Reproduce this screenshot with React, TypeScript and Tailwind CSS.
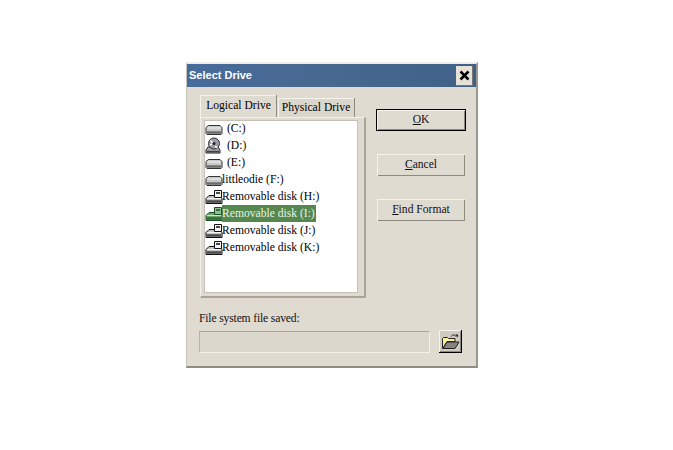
const DRIVES: { label: string; kind: "hdd" | "cd" | "usb"; indent?: boolean; selected?: boolean }[] = [
  { label: "(C:)", kind: "hdd", indent: true },
  { label: "(D:)", kind: "cd", indent: true },
  { label: "(E:)", kind: "hdd", indent: true },
  { label: "littleodie (F:)", kind: "hdd" },
  { label: "Removable disk (H:)", kind: "usb" },
  { label: "Removable disk (I:)", kind: "usb", selected: true },
  { label: "Removable disk (J:)", kind: "usb" },
  { label: "Removable disk (K:)", kind: "usb" },
];

function HddIcon() {
  return (
    <svg width="18" height="16" viewBox="0 0 18 16" className="shrink-0">
      <path d="M3.500 4.500h11.500l2 2v6l-1 1H2l-1-1v-6z" fill="#c9c9c9" stroke="#333" />
      <path d="M2 7h14" stroke="#f2f2f2" />
      <path d="M2 11.500h14" stroke="#6c6c6c" strokeWidth="2.500" />
    </svg>
  );
}

function CdIcon() {
  return (
    <svg width="18" height="17" viewBox="0 0 18 17" className="shrink-0">
      <path d="M3 10h10l2 3v3H1v-3z" fill="#a9a9a9" stroke="#222" />
      <path d="M2 14.500h12" stroke="#444" strokeWidth="1.500" />
      <circle cx="9" cy="6.500" r="5.500" fill="#9c9ca6" stroke="#333" />
      <path d="M5.500 3.500l2.500 2.500M10 9.500l2.500 1M5 8l2-1" stroke="#fff" strokeWidth="1.500" />
      <circle cx="9" cy="6.500" r="1.500" fill="#222" />
    </svg>
  );
}

function UsbIcon({ selected }: { selected?: boolean }) {
  const fill = selected ? "#6da56d" : "#c4c4c4";
  const line = selected ? "#1f4d24" : "#111";
  return (
    <svg width="18" height="17" viewBox="0 0 18 17" className="shrink-0">
      <path d="M4 7.500h10l3 3v5H1v-5z" fill={fill} stroke={line} />
      <path d="M2 10.500h14" stroke={selected ? "#cfe5cf" : "#f4f4f4"} />
      <path d="M2 13.500h14" stroke={selected ? "#2f6a35" : "#4a4a4a"} strokeWidth="2.500" />
      <path d="M9.500 2.500h7v7h-7z" fill={selected ? "#8fc08f" : "#f4f4f4"} stroke={line} />
      <path d="M11 5h4" stroke={line} strokeWidth="1.500" />
    </svg>
  );
}

function FolderIcon() {
  return (
    <svg width="19" height="17" viewBox="0 0 19 17">
      <path d="M1.500 15.500v-10l1-1h4l1 1h6.500v3H6l-4.500 7z" fill="#fbf3a0" stroke="#222" />
      <path d="M2 15.500l4-6.500h12l-4 6.500z" fill="#85857c" stroke="#222" />
      <path d="M10 3.500c1.500-2 3.500-2 5 0" fill="none" stroke="#222" />
      <path d="M14 1.500h3v3z" fill="#222" />
    </svg>
  );
}

function DriveRow({ label, kind, indent, selected }: (typeof DRIVES)[number]) {
  return (
    <div className="flex h-[17px] items-center">
      {kind === "hdd" && <HddIcon />}
      {kind === "cd" && <CdIcon />}
      {kind === "usb" && <UsbIcon selected={selected} />}
      <span
        className={`flex h-[17px] items-center whitespace-nowrap ${indent ? "ml-[4px]" : "-ml-px"} ${selected ? "bg-[#55874f] pr-px text-[#e6f3e2]" : "text-black"}`}
      >
        {label}
      </span>
    </div>
  );
}

function DialogButton({ hot, rest, isDefault }: { hot: string; rest: string; isDefault?: boolean }) {
  return (
    <button
      type="button"
      className={`flex h-[22px] items-center justify-center bg-[#e0dbd1] font-normal text-[#111] shadow-[inset_1px_1px_0_#f6f3ec,inset_-1px_-1px_0_#8d897f] ${isDefault ? "w-[90px] border border-black" : "ml-px w-[88px]"}`}
    >
      <span>
        <span className="underline">{hot}</span>
        {rest}
      </span>
    </button>
  );
}

export default function App() {
  return (
    <div
      className="h-[450px] w-[673px] overflow-hidden bg-white pl-[186px] pt-[62px] text-[11.6px]"
      style={{ fontFamily: '"Liberation Serif", serif' }}
    >
      <div className="flex h-[306px] w-[292px] flex-col border-b-2 border-r-2 border-l border-t-2 border-b-[#8f8c83] border-r-[#9a978e] border-l-[#c8c4ba] border-t-[#efece5] bg-[#e0dbd1]">
        <div className="flex h-[23px] shrink-0 items-center justify-between bg-gradient-to-r from-[#476b9b] via-[#47688f] to-[#3f6187] pl-[2px] pr-[3px]">
          <span className="text-[11px] font-bold text-white" style={{ fontFamily: '"Liberation Sans", sans-serif' }}>
            Select Drive
          </span>
          <span className="flex h-[20px] w-[17px] items-center justify-center bg-[#e6e2d9] shadow-[inset_-1px_-1px_0_#777]">
            <svg width="11" height="11" viewBox="0 0 11 11">
              <path d="M1.500 1.500l8 8M9.500 1.500l-8 8" stroke="#000" strokeWidth="2.500" />
            </svg>
          </span>
        </div>

        <div className="flex pl-[13px] pt-[8px]">
          <div className="flex w-[166px] flex-col">
            <div className="relative z-10 flex h-[22px] items-end">
              <div className="flex h-[22px] w-[77px] items-center justify-center border-r border-r-[#8d897f] bg-[#e0dbd1] pb-[1px] pl-[1px] shadow-[inset_1px_1px_0_#f6f3ec]">
                Logical Drive
              </div>
              <div className="ml-px flex h-[19px] w-[77px] items-center justify-center border-r border-r-[#8d897f] bg-[#dcd7cc] shadow-[inset_1px_1px_0_#f6f3ec]">
                Physical Drive
              </div>
            </div>
            <div className="flex h-[181px] border-b-2 border-r-2 border-l border-t border-b-[#a9a59b] border-r-[#a9a59b] border-l-[#f3f0ea] border-t-[#f3f0ea] pb-[3px] pl-[3px] pr-[6px] pt-[2px]">
              <div className="h-full w-full border border-[#c5c1b7] bg-white">
                <div className="-mt-[1px]">
                  {DRIVES.map((drive) => (
                    <DriveRow key={drive.label} {...drive} />
                  ))}
                </div>
              </div>
            </div>
          </div>

          <div className="ml-[10px] flex flex-col gap-[23px] pt-[14px]">
            <DialogButton hot="O" rest="K" isDefault />
            <DialogButton hot="C" rest="ancel" />
            <DialogButton hot="F" rest="ind Format" />
          </div>
        </div>

        <div className="mt-[13px] pl-[12px] leading-[16px] tracking-[-0.15px] text-[#111]">File system file saved:</div>
        <div className="mt-[3px] flex items-center pl-[12px]">
          <div className="h-[22px] w-[231px] border border-b-[#f3f0ea] border-l-[#b5b1a7] border-r-[#f3f0ea] border-t-[#a9a59b] bg-[#dcd7cd]" />
          <div className="ml-[9px] flex h-[23px] w-[23px] items-center justify-center border-b border-r border-b-black border-r-black bg-[#cfcbc1] shadow-[inset_1px_1px_0_#f6f3ec,inset_-1px_-1px_0_#8d897f]">
            <FolderIcon />
          </div>
        </div>
      </div>
    </div>
  );
}
